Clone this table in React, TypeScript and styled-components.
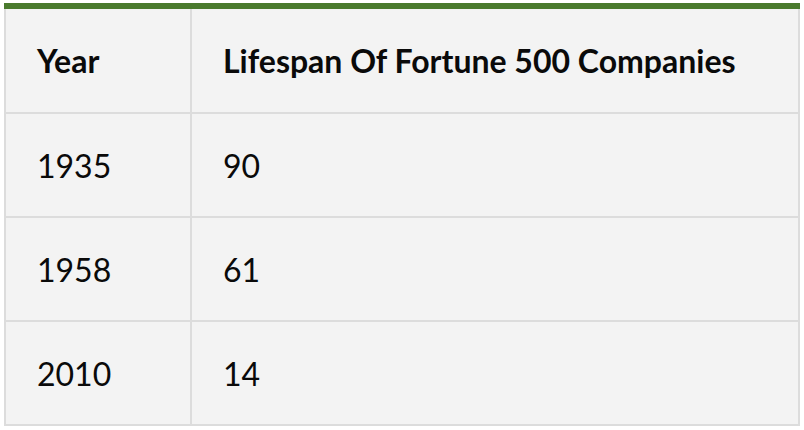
import React from "react";
import styled, { createGlobalStyle } from "styled-components";

const Global = createGlobalStyle`
  html, body { margin: 0; padding: 0; background: #ffffff; }
  body { font-family: "Lato", "Noto Sans", sans-serif; }
`;

const Page = styled.div`
  padding: 3px 4px 0 4px;
`;

const Table = styled.table`
  width: 796px;
  border-collapse: collapse;
  background: #f3f3f3;
  border: 2px solid #dcdcdc;
  border-top: 6px solid #4a7a2d;
  color: #0a0a0a;
`;

const Cell = styled.td<{ $head?: boolean }>`
  height: ${(p) => (p.$head ? 107 : 104)}px;
  padding: 0 31px;
  border: 2px solid #dcdcdc;
  font-size: 32px;
  font-weight: ${(p) => (p.$head ? 700 : 400)};
  text-align: left;
  vertical-align: middle;
  box-sizing: border-box;
`;

const FirstCol = styled.col`
  width: 186px;
`;

const rows = [
  ["1935", "90"],
  ["1958", "61"],
  ["2010", "14"],
];

export default function App() {
  return (
    <>
      <Global />
      <Page>
        <Table>
          <colgroup>
            <FirstCol />
            <col />
          </colgroup>
          <thead>
            <tr>
              <Cell as="th" $head>
                Year
              </Cell>
              <Cell as="th" $head>
                Lifespan Of Fortune 500 Companies
              </Cell>
            </tr>
          </thead>
          <tbody>
            {rows.map(([y, v]) => (
              <tr key={y}>
                <Cell>{y}</Cell>
                <Cell>{v}</Cell>
              </tr>
            ))}
          </tbody>
        </Table>
      </Page>
    </>
  );
}
